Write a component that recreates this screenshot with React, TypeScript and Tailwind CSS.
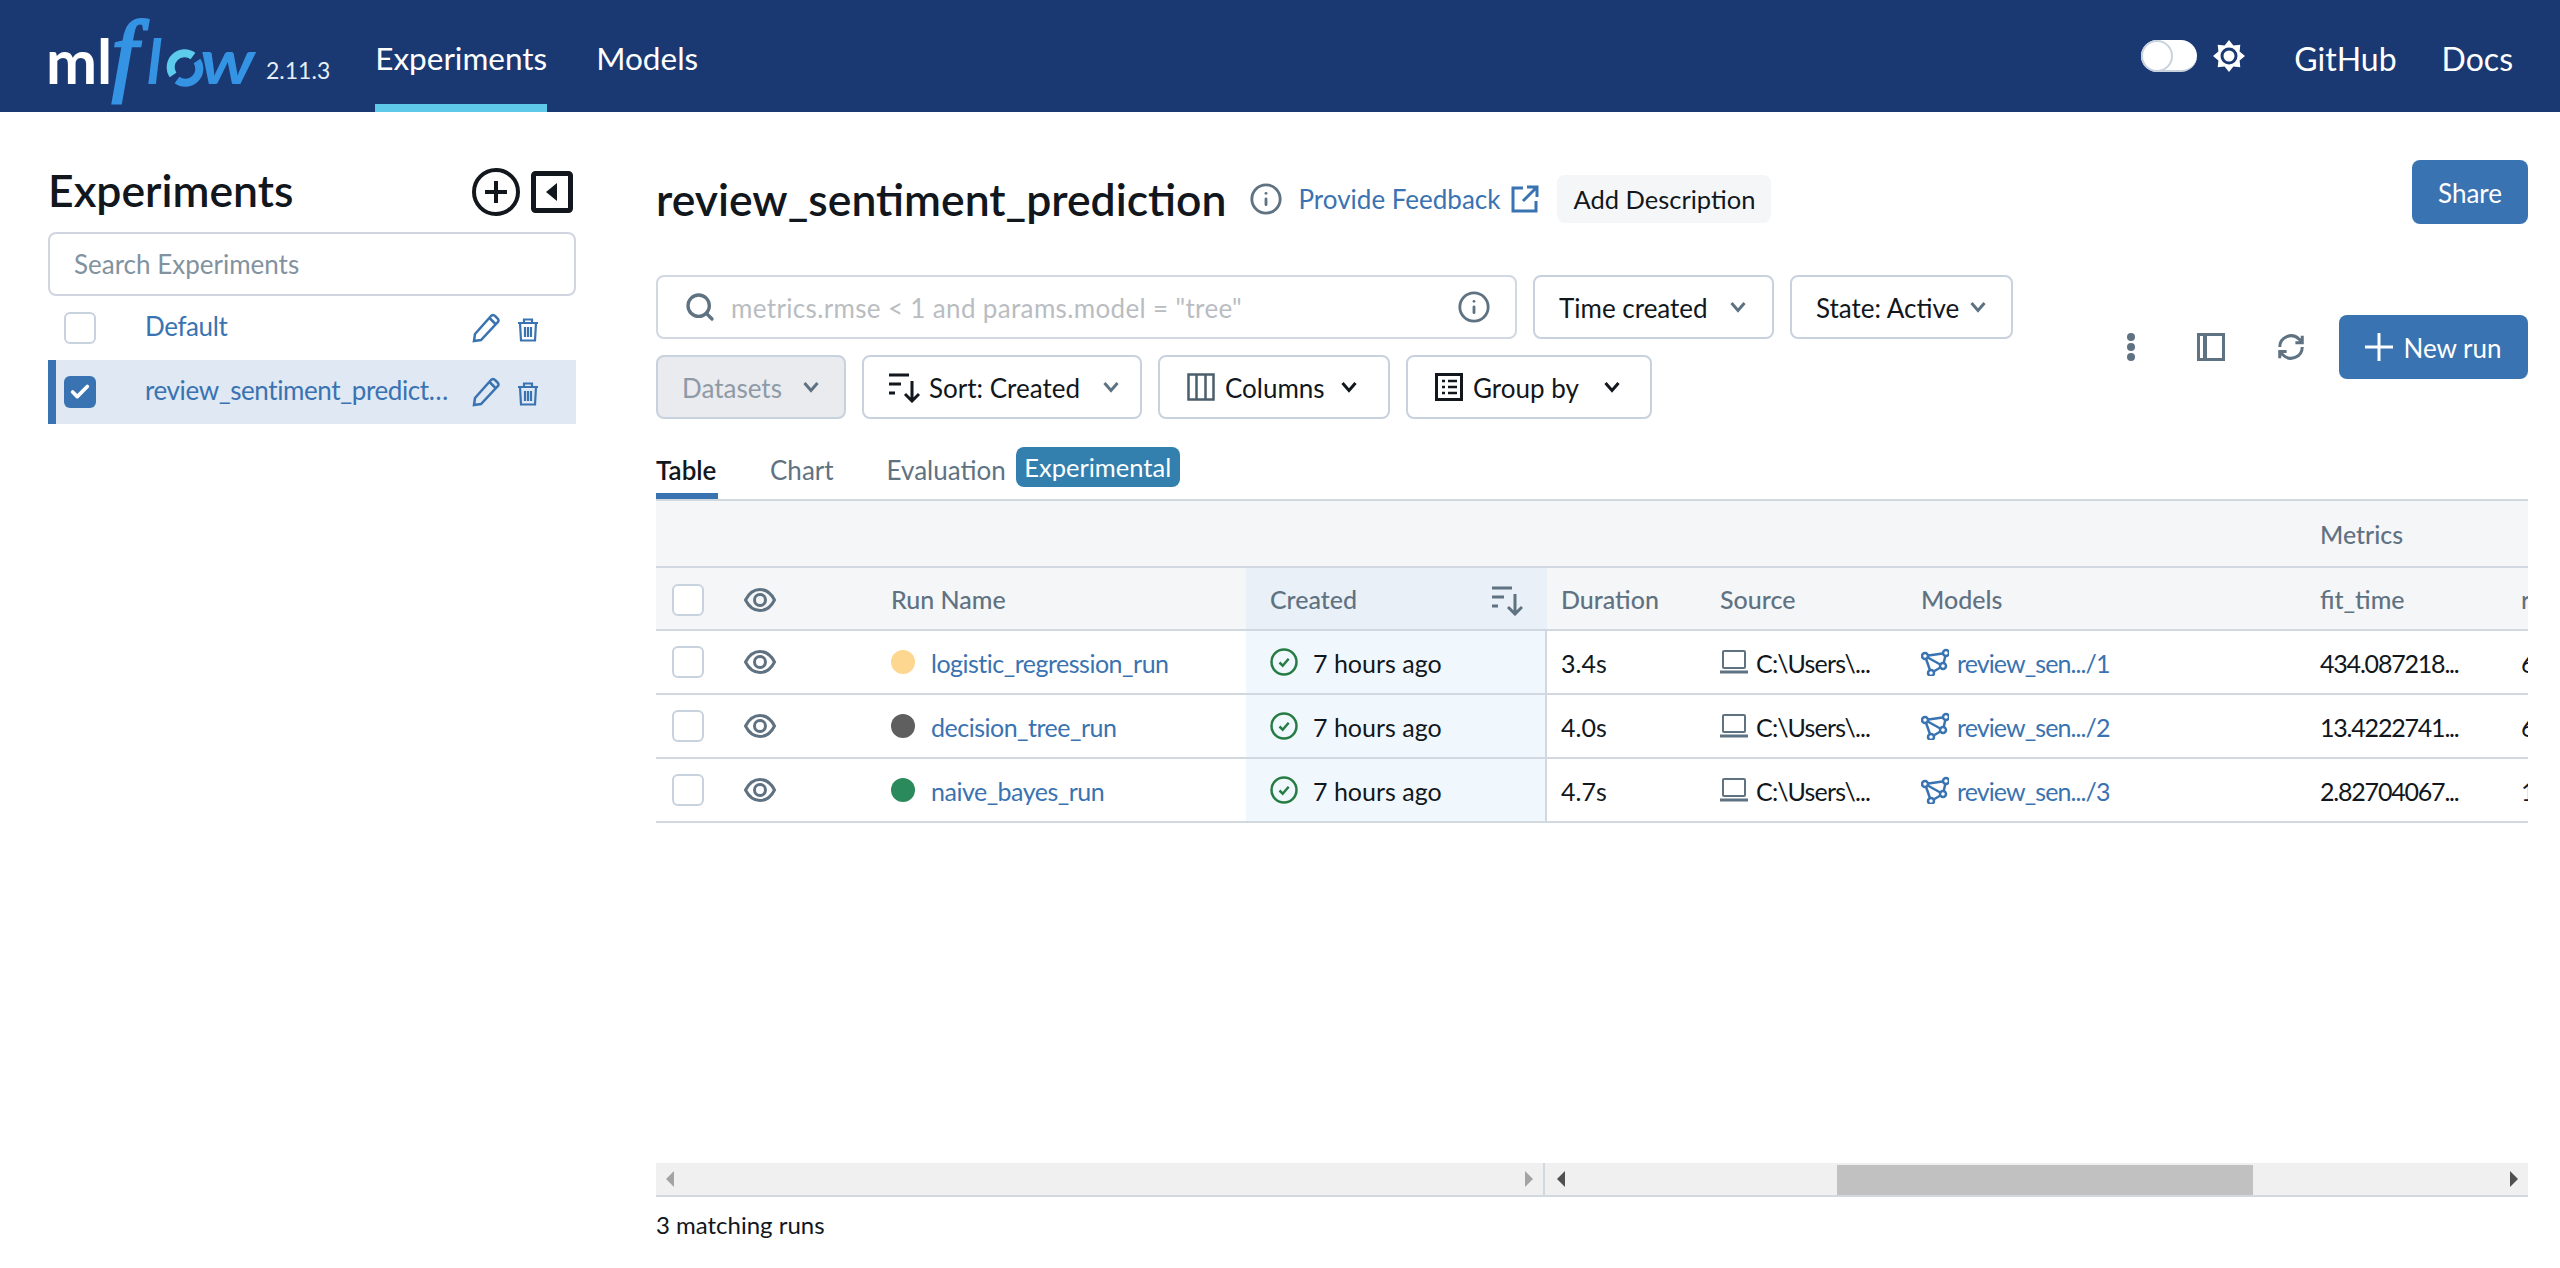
import { Info, Search, Check } from "lucide-react";

const runs = [
  { name: "logistic_regression_run", color: "bg-[#fdd68f]", duration: "3.4s", model: "review_sen.../1", fit: "434.087218...", next: "6" },
  { name: "decision_tree_run", color: "bg-[#5f5f5f]", duration: "4.0s", model: "review_sen.../2", fit: "13.4222741...", next: "6" },
  { name: "naive_bayes_run", color: "bg-[#2b8a5b]", duration: "4.7s", model: "review_sen.../3", fit: "2.82704067...", next: "1" },
];

function Logo() {
  return (
    <svg width="212" height="92" viewBox="48 0 212 92" className="shrink-0 overflow-visible">
      <text x="46" y="74" fill="#fff" fontFamily="Lato" fontWeight="700" fontSize="61">ml</text>
      <text x="112" y="74" fill="#3593e4" stroke="#3593e4" strokeWidth="3" fontFamily="Liberation Serif" fontStyle="italic" fontSize="92">f</text>
      <text x="147" y="74" fill="#3593e4" fontFamily="Lato" fontStyle="italic" fontWeight="700" fontSize="62">l</text>
      <path d="M173 65a14 14 0 0 1 20-19" fill="none" stroke="#5dcbeb" strokeWidth="8" />
      <path d="M197 51a14 14 0 0 1-20 19" fill="none" stroke="#3593e4" strokeWidth="8" />
      <text x="200" y="74" fill="#3593e4" fontFamily="Lato" fontStyle="italic" fontWeight="700" fontSize="62" textLength="55" lengthAdjust="spacingAndGlyphs">w</text>
    </svg>
  );
}

function Sun() {
  return (
    <svg width="32" height="32" viewBox="0 0 32 32">
      <path fill="#fff" d="M16 0L20.400 5.400 27.300 4.700 26.600 11.600 32 16 26.600 20.400 27.300 27.300 20.400 26.600 16 32 11.600 26.600 4.700 27.300 5.400 20.400 0 16 5.400 11.600 4.700 4.700 11.600 5.400z" />
      <circle cx="16" cy="16" r="7" fill="#fff" stroke="#1a3872" strokeWidth="3" />
    </svg>
  );
}

function Chevron({ color = "#5f7282" }: { color?: string }) {
  return (
    <svg width="16" height="12" viewBox="0 0 16 12" fill="none" stroke={color} strokeWidth="3" className="shrink-0">
      <path d="M1.500 2L8 9.500 14.500 2" />
    </svg>
  );
}

function SortIcon({ color = "#11171c" }: { color?: string }) {
  return (
    <svg width="32" height="32" viewBox="0 0 32 32" fill="none" stroke={color} strokeWidth="3" className="shrink-0">
      <path d="M1 4h20M1 13h12M1 22h6M24 10v20M17 23l7 7 7-7" />
    </svg>
  );
}

function ColumnsIcon() {
  return (
    <svg width="28" height="28" viewBox="0 0 28 28" fill="none" stroke="#4b5e6c" strokeWidth="2.500" className="shrink-0">
      <rect x="1.500" y="1.500" width="25" height="25" />
      <path d="M9.500 1.500v25M18.500 1.500v25" />
    </svg>
  );
}

function GroupIcon() {
  return (
    <svg width="28" height="28" viewBox="0 0 28 28" fill="none" stroke="#11171c" strokeWidth="3" className="shrink-0">
      <rect x="1.500" y="1.500" width="25" height="25" />
      <path d="M7 8h3M7 14h3M7 20h3M13 8h9M13 14h9M13 20h9" strokeWidth="2.500" />
    </svg>
  );
}

function Eye() {
  return (
    <svg width="32" height="24" viewBox="0 0 32 24" fill="none" stroke="#5f7282" className="shrink-0">
      <path d="M1.500 12C5 5 10 1.500 16 1.500S27 5 30.500 12C27 19 22 22.500 16 22.500S5 19 1.500 12z" strokeWidth="3" />
      <circle cx="16" cy="12" r="5.500" strokeWidth="3" />
    </svg>
  );
}

function StatusOk() {
  return (
    <svg width="28" height="28" viewBox="0 0 28 28" fill="none" stroke="#277c43" className="shrink-0">
      <circle cx="14" cy="14" r="12.500" strokeWidth="2.500" />
      <path d="M9.500 14.500l3.200 3.200 6-7" strokeWidth="2.500" />
    </svg>
  );
}

function Laptop() {
  return (
    <svg width="28" height="24" viewBox="0 0 28 24" fill="none" stroke="#5f7282" className="shrink-0">
      <rect x="3" y="1" width="22" height="17" rx="1" strokeWidth="2" />
      <path d="M0 22h28" strokeWidth="3" />
    </svg>
  );
}

function ModelIcon() {
  return (
    <svg width="28" height="28" viewBox="0 0 28 28" fill="none" stroke="#3a73b1" strokeWidth="2.500" className="shrink-0">
      <path d="M4 8L25 5 22 18 10 25zM4 8L22 18" />
      <circle cx="4" cy="8" r="3" fill="#fff" />
      <circle cx="25" cy="5" r="3" fill="#fff" />
      <circle cx="22" cy="18" r="3" fill="#fff" />
      <circle cx="10" cy="25" r="3" fill="#fff" />
    </svg>
  );
}

function PencilIcon() {
  return (
    <svg width="28" height="30" viewBox="0 0 28 30" fill="none" stroke="#3a73b1" strokeWidth="2.500" className="shrink-0">
      <path d="M2 28l1-7L19 3a2.500 2.500 0 0 1 4 0l2.500 2.500a2.500 2.500 0 0 1 0 4L9 27zM17.500 5l6.500 6.500" />
    </svg>
  );
}

function TrashIcon() {
  return (
    <svg width="22" height="24" viewBox="0 0 22 24" fill="none" stroke="#3a73b1" strokeWidth="2.200" className="shrink-0">
      <path d="M1 5h20M7 5V1.500h8V5M3 5l1 17.500h14L19 5M8 9v10M11 9v10M14 9v10" />
    </svg>
  );
}

function FilterButton({ children, className }: { children: React.ReactNode; className: string }) {
  return (
    <div className={`flex h-16 shrink-0 items-center whitespace-nowrap rounded-lg border-2 border-[#c8d2de] text-[26px] ${className}`}>
      {children}
    </div>
  );
}

function RowCheckbox() {
  return <span className="h-8 w-8 shrink-0 rounded-[6px] border-2 border-[#c8d2de] bg-white" />;
}

function ExperimentRow({ name, selected }: { name: string; selected?: boolean }) {
  return (
    <div className={`flex h-16 items-center ${selected ? "border-l-8 border-[#3a73b1] bg-[#dfe8f3] pl-2" : "pl-4"}`}>
      {selected ? (
        <span className="flex h-8 w-8 shrink-0 items-center justify-center rounded-[6px] bg-[#3a73b1]">
          <Check size={22} strokeWidth={4} color="#fff" />
        </span>
      ) : (
        <RowCheckbox />
      )}
      <span className="ml-[49px] w-[308px] shrink-0 truncate pb-1 text-[26px] leading-9 tracking-[-0.4px] text-[#3a73b1]">{name}</span>
      <span className="ml-[19px]"><PencilIcon /></span>
      <span className="ml-[17px] pt-1"><TrashIcon /></span>
    </div>
  );
}

function HeaderCell({ className, children }: { className: string; children?: React.ReactNode }) {
  return <div className={`flex h-full shrink-0 items-center pt-[2px] text-[25px] font-medium text-[#5f7282] ${className}`}>{children}</div>;
}

export default function App() {
  return (
    <div className="flex h-[1268px] w-full flex-col overflow-hidden bg-white [font-family:Lato,sans-serif] text-[#11171c]">
      <header className="flex h-[112px] shrink-0 items-center bg-[#1a3872] pl-12 pr-[47px] text-white">
        <Logo />
        <span className="ml-[6px] mt-[28px] text-[23px] text-[#e4eef6]">2.11.3</span>
        <div className="ml-[45px] flex h-full gap-[49px] text-[31.500px]">
          <div className="flex h-full items-center border-b-8 border-[#5fc9ea] pt-[14px]">Experiments</div>
          <div className="flex h-full items-center pt-[6px]">Models</div>
        </div>
        <div className="ml-auto flex items-center">
          <div className="relative h-8 w-14 rounded-full border-b-2 border-[#c8d2de] bg-white">
            <span className="absolute left-0 top-0 h-8 w-8 rounded-full border-2 border-[#c8d2de] bg-white" />
          </div>
          <span className="ml-4"><Sun /></span>
          <span className="ml-[49px] pt-[6px] text-[32px]">GitHub</span>
          <span className="ml-[45px] pt-[6px] text-[32px]">Docs</span>
        </div>
      </header>

      <div className="flex min-h-0 flex-1">
        <aside className="w-[656px] shrink-0 pl-12 pr-20 pt-[48px]">
          <div className="flex h-[72px] items-center">
            <h2 className="mb-[12px] text-[44.500px] font-semibold">Experiments</h2>
            <svg width="48" height="48" viewBox="0 0 48 48" fill="none" stroke="#11171c" strokeWidth="4" className="mb-[8px] ml-auto shrink-0">
              <circle cx="24" cy="24" r="22" />
              <path d="M24 13v22M13 24h22" />
            </svg>
            <svg width="42" height="42" viewBox="0 0 42 42" className="mb-[8px] ml-[11px] mr-[3px] shrink-0">
              <rect x="2.500" y="2.500" width="37" height="37" rx="2" fill="none" stroke="#11171c" strokeWidth="5" />
              <path d="M26 12v18l-11-9z" fill="#11171c" />
            </svg>
          </div>
          <div className="flex h-16 items-center rounded-lg border-2 border-[#d1d5e0] pl-6 text-[26px] text-[#82929f]">Search Experiments</div>
          <ExperimentRow name="Default" />
          <ExperimentRow name="review_sentiment_prediction" selected />
        </aside>

        <main className="flex min-w-0 flex-1 flex-col pr-8 pt-12">
          <div className="flex h-16 items-center">
            <h1 className="mt-[14px] text-[44.500px] font-semibold">review_sentiment_prediction</h1>
            <div className="mt-[14px] flex items-center">
              <Info size={34} color="#5f7282" strokeWidth={2} className="ml-[22px] shrink-0" />
              <span className="ml-[16px] text-[26px] text-[#3a73b1]">Provide Feedback</span>
              <svg width="28" height="28" viewBox="0 0 28 28" fill="none" stroke="#3a73b1" strokeWidth="3" className="ml-[11px] shrink-0">
                <path d="M12 3H2v23h23V16M16 2h10v10M26 2L12 16" />
              </svg>
              <div className="ml-[18px] flex h-12 items-center rounded-lg bg-[#f5f6f8] px-4 text-[25.500px]">Add Description</div>
            </div>
            <div className="ml-auto flex h-16 w-[116px] items-center justify-center rounded-lg bg-[#3a73b1] pt-[2px] text-[26px] text-white">Share</div>
          </div>

          <div className="mt-[51px] flex">
            <div className="flex flex-col gap-4">
              <div className="flex gap-4">
                <div className="flex h-16 w-[861px] items-center rounded-lg border-2 border-[#d1d8e2] pl-[26px] pr-6 text-[26px] text-[#b9bdc1]">
                  <Search size={32} color="#5f7282" strokeWidth={2.500} className="shrink-0" />
                  <span className="ml-[15px] pt-[2px] tracking-[0.35px]">metrics.rmse &lt; 1 and params.model = "tree"</span>
                  <Info size={34} color="#5f7282" strokeWidth={2} className="ml-auto shrink-0" />
                </div>
                <FilterButton className="w-[241px] pl-6"><span className="w-[171px] pt-[2px]">Time created</span> <Chevron /></FilterButton>
                <FilterButton className="w-[223px] pl-6"><span className="w-[154px] pt-[2px]">State: Active</span> <Chevron /></FilterButton>
              </div>
              <div className="flex gap-4">
                <FilterButton className="w-[190px] bg-[#e9ebef] pl-6 text-[#8e9aa5]"><span className="w-[121px] pt-[2px]">Datasets</span> <Chevron /></FilterButton>
                <FilterButton className="w-[280px] pl-6"><SortIcon /><span className="ml-[9px] w-[174px] pt-[2px]">Sort: Created</span> <Chevron /></FilterButton>
                <FilterButton className="w-[232px] pl-[27px]"><ColumnsIcon /><span className="ml-[10px] w-[116px] pt-[2px]">Columns</span> <Chevron color="#11171c" /></FilterButton>
                <FilterButton className="w-[246px] pl-[27px]"><GroupIcon /><span className="ml-[10px] w-[131px] pt-[2px]">Group by</span> <Chevron color="#11171c" /></FilterButton>
              </div>
            </div>
            <div className="ml-auto mb-[40px] flex items-center self-end">
              <svg width="12" height="30" viewBox="0 0 12 30" fill="#5f7282" className="shrink-0">
                <circle cx="6" cy="5" r="4" />
                <circle cx="6" cy="15" r="4" />
                <circle cx="6" cy="25" r="4" />
              </svg>
              <svg width="28" height="28" viewBox="0 0 28 28" fill="none" stroke="#5f7282" strokeWidth="3" className="ml-[60px] shrink-0">
                <rect x="1.500" y="1.500" width="25" height="25" />
                <path d="M8 1.500v25" strokeWidth="4" />
              </svg>
              <svg width="30" height="30" viewBox="0 0 24 24" fill="none" stroke="#5f7282" strokeWidth="2.400" className="ml-[51px] shrink-0">
                <path d="M3 12a9 9 0 0 1 15.500-6.200L21 8M21 3v5.500h-5.500M21 12a9 9 0 0 1-15.500 6.200L3 16M3 21v-5.500h5.500" />
              </svg>
              <div className="ml-[33px] flex h-16 w-[189px] items-center justify-center gap-[10px] rounded-lg bg-[#3a73b1] text-[26px] text-white">
                <svg width="28" height="28" viewBox="0 0 28 28" fill="none" stroke="#fff" strokeWidth="3" className="shrink-0">
                  <path d="M14 0v28M0 14h28" />
                </svg>
                <span className="pt-[2px]">New run</span>
              </div>
            </div>
          </div>

          <div className="mt-0 flex h-[80px] shrink-0 items-end text-[26px] text-[#5f7282]">
            <div className="flex h-[52px] w-[62px] items-center border-b-[6px] border-[#3a73b1] font-semibold text-[#11171c]">Table</div>
            <div className="ml-[52px] flex h-[52px] items-center pb-[6px]">Chart</div>
            <div className="ml-[53px] flex h-[52px] items-center pb-[6px]">Evaluation</div>
            <div className="mb-[12px] ml-[10px] flex h-10 w-[164px] items-center justify-center rounded-lg bg-[#337fae] text-[25.500px] text-white">Experimental</div>
          </div>

          <div className="min-h-0 flex-1 overflow-hidden border-t-2 border-[#d1d8e0]">
            <div className="flex h-[65px] items-center justify-start bg-[#f5f6f8] pl-[1664px] pt-[2px] text-[25px] font-medium text-[#5f7282]">Metrics</div>
            <div className="flex h-[65px] border-y-2 border-[#d1d8e0] bg-[#f5f6f8]">
              <HeaderCell className="w-[88px] pl-4"><RowCheckbox /></HeaderCell>
              <HeaderCell className="w-[147px]"><Eye /></HeaderCell>
              <HeaderCell className="w-[355px]">Run Name</HeaderCell>
              <HeaderCell className="w-[301px] bg-[#e9f0f8] px-6">Created <span className="ml-auto"><SortIcon color="#5f7282" /></span></HeaderCell>
              <HeaderCell className="w-[173px] pl-[14px]">Duration</HeaderCell>
              <HeaderCell className="w-[201px]">Source</HeaderCell>
              <HeaderCell className="w-[399px]">Models</HeaderCell>
              <HeaderCell className="w-[201px]">fit_time</HeaderCell>
              <HeaderCell className="w-[30px]">r</HeaderCell>
            </div>
            {runs.map((run) => (
              <div key={run.name} className="flex h-[64px] border-b-2 border-[#d1d8e0] text-[25px]">
                <div className="flex w-[88px] shrink-0 items-center pl-4"><RowCheckbox /></div>
                <div className="flex w-[147px] shrink-0 items-center"><Eye /></div>
                <div className="flex w-[355px] shrink-0 items-center">
                  <span className={`h-6 w-6 shrink-0 rounded-full ${run.color}`} />
                  <span className="ml-4 pt-[3px] tracking-[-0.5px] text-[#3a73b1]">{run.name}</span>
                </div>
                <div className="flex w-[301px] shrink-0 items-center border-r-2 border-[#d1d8e0] bg-[#f0f7fd] pl-6">
                  <StatusOk />
                  <span className="ml-[15px] pt-[3px]">7 hours ago</span>
                </div>
                <div className="flex w-[173px] shrink-0 items-center pl-[14px] pt-[3px]">{run.duration}</div>
                <div className="flex w-[201px] shrink-0 items-center gap-2 tracking-[-0.8px]"><Laptop /> <span className="pt-[3px]">C:\Users\...</span></div>
                <div className="flex w-[399px] shrink-0 items-center gap-2 tracking-[-0.9px] text-[#3a73b1]"><ModelIcon /> <span className="pt-[3px]">{run.model}</span></div>
                <div className="flex w-[201px] shrink-0 items-center pt-[3px] tracking-[-1.200px]">{run.fit}</div>
                <div className="flex w-[30px] shrink-0 items-center pt-[3px]">{run.next}</div>
              </div>
            ))}
          </div>

          <div className="flex h-[34px] shrink-0 border-b-2 border-[#d1d8e0] bg-[#f0f0f0]">
            <div className="flex w-[889px] shrink-0 items-center justify-between border-r-2 border-[#d1d8e0] px-[10px]">
              <span className="h-0 w-0 border-y-[8px] border-r-[8px] border-y-transparent border-r-[#a3a3a3]" />
              <span className="h-0 w-0 border-y-[8px] border-l-[8px] border-y-transparent border-l-[#a3a3a3]" />
            </div>
            <div className="flex min-w-0 flex-1 items-center pl-[12px] pr-[10px]">
              <span className="h-0 w-0 border-y-[8px] border-r-[8px] border-y-transparent border-r-[#505050]" />
              <span className="ml-[272px] mt-[2px] h-[30px] w-[416px] bg-[#c1c1c1]" />
              <span className="ml-auto h-0 w-0 border-y-[8px] border-l-[8px] border-y-transparent border-l-[#505050]" />
            </div>
          </div>
          <div className="flex h-[71px] shrink-0 items-start pt-[10px] text-[24px]">3 matching runs</div>
        </main>
      </div>
    </div>
  );
}
